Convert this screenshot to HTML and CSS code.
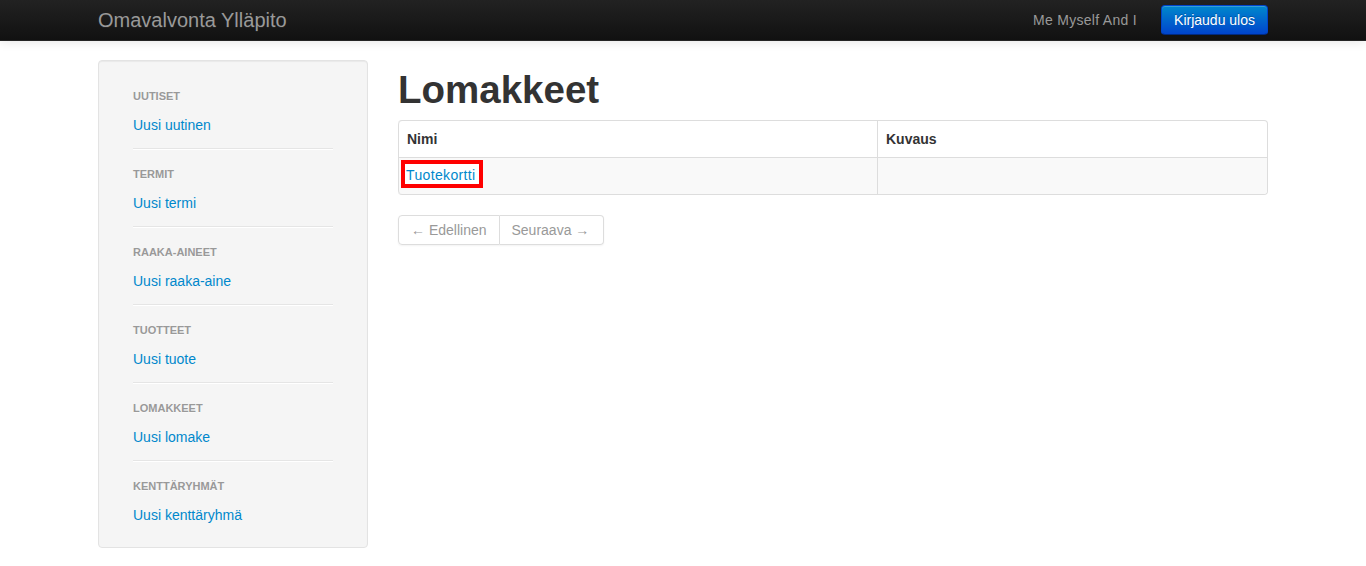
FILE: index.html
```html
<!DOCTYPE html>
<html lang="fi">
<head>
<meta charset="utf-8">
<title>Omavalvonta Ylläpito</title>
<link rel="stylesheet" href="styles.css">
</head>
<body>
<header class="navbar">
  <div class="container navbar-row">
    <a class="brand" href="#">Omavalvonta Ylläpito</a>
    <div class="navbar-right">
      <span class="navbar-text">Me Myself And I</span>
      <a class="btn btn-primary" href="#">Kirjaudu ulos</a>
    </div>
  </div>
</header>
<div class="container main">
  <aside class="sidebar well">
    <ul class="nav-list">
      <li class="nav-header">Uutiset</li>
      <li class="nav-link"><a href="#">Uusi uutinen</a></li>
      <li class="divider"></li>
      <li class="nav-header">Termit</li>
      <li class="nav-link"><a href="#">Uusi termi</a></li>
      <li class="divider"></li>
      <li class="nav-header">Raaka-aineet</li>
      <li class="nav-link"><a href="#">Uusi raaka-aine</a></li>
      <li class="divider"></li>
      <li class="nav-header">Tuotteet</li>
      <li class="nav-link"><a href="#">Uusi tuote</a></li>
      <li class="divider"></li>
      <li class="nav-header">Lomakkeet</li>
      <li class="nav-link"><a href="#">Uusi lomake</a></li>
      <li class="divider"></li>
      <li class="nav-header">Kenttäryhmät</li>
      <li class="nav-link"><a href="#">Uusi kenttäryhmä</a></li>
    </ul>
  </aside>
  <main class="content">
    <h1 class="page-title">Lomakkeet</h1>
    <table class="table">
      <thead>
        <tr><th class="col-name">Nimi</th><th>Kuvaus</th></tr>
      </thead>
      <tbody>
        <tr><td><a class="highlight" href="#">Tuotekortti</a></td><td></td></tr>
      </tbody>
    </table>
    <div class="pagination">
      <span class="page disabled">&larr; Edellinen</span>
      <span class="page disabled page-next">Seuraava &rarr;</span>
    </div>
  </main>
</div>
</body>
</html>
```
FILE: styles.css
```css
* { box-sizing: border-box; }
html, body { margin: 0; padding: 0; }
body {
  font-family: "Liberation Sans", Arial, Helvetica, sans-serif;
  font-size: 14px;
  line-height: 20px;
  color: #333;
  background: #fff;
}
a { color: #0088cc; text-decoration: none; }

.container { width: 1170px; margin: 0 auto; }

.navbar {
  height: 41px;
  background: linear-gradient(to bottom, #222222, #111111);
  border-bottom: 1px solid #252525;
  box-shadow: 0 1px 10px rgba(0,0,0,0.1);
}
.navbar-row {
  display: flex;
  justify-content: space-between;
  align-items: center;
  height: 40px;
}
.brand {
  color: #999;
  font-size: 20px;
  line-height: 20px;
  text-shadow: 0 1px 0 #222;
}
.navbar-right { display: flex; align-items: center; gap: 24px; }
.navbar-text { color: #999; letter-spacing: 0.3px; }
.btn {
  display: inline-block;
  padding: 4px 12px;
  line-height: 20px;
  font-size: 14px;
  border-radius: 4px;
  border: 1px solid;
}
.btn-primary {
  color: #fff;
  text-shadow: 0 -1px 0 rgba(0,0,0,0.25);
  background: linear-gradient(to bottom, #0088cc, #0044cc);
  border-color: #0044cc #0044cc #002a80;
  box-shadow: inset 0 1px 0 rgba(255,255,255,0.2), 0 1px 2px rgba(0,0,0,0.05);
}

.main {
  display: flex;
  gap: 30px;
  padding-top: 19px;
  align-items: flex-start;
}
.sidebar { width: 270px; flex: none; }
.well {
  background: #f5f5f5;
  border: 1px solid #e3e3e3;
  border-radius: 4px;
  box-shadow: inset 0 1px 1px rgba(0,0,0,0.05);
  padding: 22px 19px 19px;
}
.nav-list { list-style: none; margin: 0; padding: 0 15px; }
.nav-header {
  padding: 3px 0;
  line-height: 20px;
  font-size: 11px;
  font-weight: bold;
  color: #999;
  text-transform: uppercase;
  text-shadow: 0 1px 0 rgba(255,255,255,0.5);
}
.nav-link { margin-top: 3px; padding: 3px 0; line-height: 20px; }
.divider {
  height: 2px;
  margin: 10px 0 11px;
  background: #e5e5e5;
  border-bottom: 1px solid #fff;
}

.content { width: 870px; flex: none; }
.page-title {
  margin: 10px 0;
  font-size: 38.5px;
  line-height: 40px;
  font-weight: bold;
  color: #333;
}
.table {
  width: 100%;
  border-collapse: separate;
  border-spacing: 0;
  border: 1px solid #ddd;
  border-left: 0;
  border-radius: 4px;
  margin-bottom: 20px;
}
.table th, .table td {
  padding: 8px;
  height: 36px;
  line-height: 20px;
  text-align: left;
  vertical-align: top;
  border-left: 1px solid #ddd;
}
.table td { border-top: 1px solid #ddd; background: #f9f9f9; height: 37px; }
.table th { font-weight: bold; }
.col-name { width: 479px; }
.table tbody tr:last-child td:first-child { border-bottom-left-radius: 4px; }
.table tbody tr:last-child td:last-child { border-bottom-right-radius: 4px; }
.table thead tr th:first-child { border-top-left-radius: 4px; }
.highlight {
  display: inline-block;
  line-height: 18px;
  background: #fff;
  outline: 4px solid #ff0000;
  padding: 2px 4px 0 1px;
  margin: -2px 0 0 -2px;
  vertical-align: top;
  letter-spacing: 0.35px;
}

.pagination {
  display: inline-flex;
  border-radius: 4px;
  box-shadow: 0 1px 2px rgba(0,0,0,0.05);
}
.page {
  padding: 4px 12px;
  line-height: 20px;
  border: 1px solid #ddd;
  border-left-width: 0;
  background: #fff;
  color: #999;
}
.page-next { padding-right: 14px; }
.page:first-child { border-left-width: 1px; border-radius: 4px 0 0 4px; }
.page:last-child { border-radius: 0 4px 4px 0; }
```
